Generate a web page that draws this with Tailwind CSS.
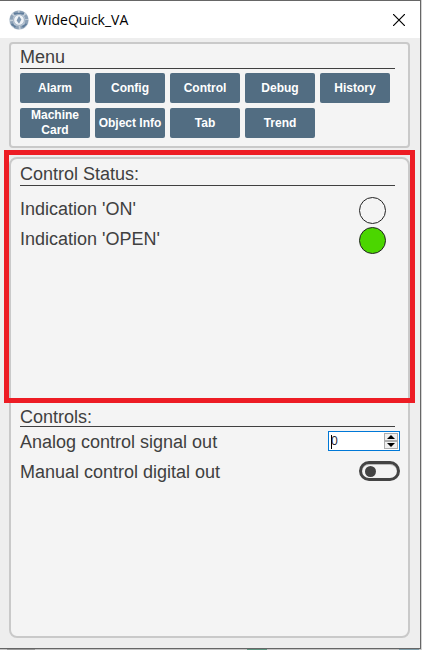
<!DOCTYPE html>
<html lang="en">
<head>
<meta charset="utf-8">
<meta name="viewport" content="width=device-width, initial-scale=1">
<title>WideQuick_VA</title>
<script src="https://cdn.jsdelivr.net/npm/@tailwindcss/browser@4"></script>
</head>
<body class="flex min-h-screen flex-col bg-[#d4d4d4] pr-px font-['Liberation_Sans',Arial,sans-serif] text-lg text-[#404040]">
<div class="flex flex-1 flex-col border-t border-r border-b border-[#666] bg-[#eee]">
  <header class="flex h-[37px] items-center bg-white pl-[9px] pr-[15px]">
    <svg class="size-5" viewBox="0 0 20 20" aria-hidden="true">
      <circle cx="10" cy="10" r="9.8" fill="#c3ced9"/>
      <circle cx="10" cy="10" r="7.8" fill="none" stroke="#8ba0b6" stroke-width="3" stroke-dasharray="4.4 1.8"/>
      <path d="M5 3.6h10M2.5 14l4 3M17.5 14l-4 3" stroke="#5f7d9c" stroke-width="1.8"/>
      <circle cx="10" cy="10" r="5.4" fill="#eff3f7" stroke="#9fb0c2"/>
      <path d="M10 6 12.4 9.6 10 13.8 7.6 10.4z" fill="#7f97b0"/>
    </svg>
    <h1 class="ml-1.5 flex-1 font-['Open_Sans','Noto_Sans',sans-serif] text-sm leading-5 text-black">WideQuick_VA</h1>
    <button type="button" aria-label="Close" class="size-3">
      <svg viewBox="0 0 12 12" class="size-3" fill="none" stroke="#000" stroke-width="1.2"><path d="M0 0 12 12M12 0 0 12"/></svg>
    </button>
  </header>

  <main class="flex flex-1 flex-col gap-[9px] pt-1 pr-[10px] pb-[10px] pl-[9px]">
    <nav aria-label="Menu" class="rounded border-2 border-[#c9c9c9] bg-[#f4f4f4] pt-[3px] pr-[13px] pb-2 pl-[9px]">
      <h2 class="border-b border-[#404040] pb-px leading-5">Menu</h2>
      <div class="mt-1 flex flex-wrap gap-[5px] text-xs leading-[15px] font-bold text-white">
        <button type="button" class="h-[30px] w-[70px] rounded-xs bg-[#526d82]">Alarm</button>
        <button type="button" class="h-[30px] w-[70px] rounded-xs bg-[#526d82]">Config</button>
        <button type="button" class="h-[30px] w-[70px] rounded-xs bg-[#526d82]">Control</button>
        <button type="button" class="h-[30px] w-[70px] rounded-xs bg-[#526d82]">Debug</button>
        <button type="button" class="h-[30px] w-[70px] rounded-xs bg-[#526d82]">History</button>
        <button type="button" class="h-[30px] w-[70px] rounded-xs bg-[#526d82]">Machine Card</button>
        <button type="button" class="h-[30px] w-[70px] rounded-xs bg-[#526d82]">Object Info</button>
        <button type="button" class="h-[30px] w-[70px] rounded-xs bg-[#526d82]">Tab</button>
        <button type="button" class="h-[30px] w-[70px] rounded-xs bg-[#526d82]">Trend</button>
      </div>
    </nav>

    <div class="relative flex-1 rounded-lg border-2 border-[#c9c9c9] bg-[#f4f4f4] pt-[5px] pl-[9px]">
      <section class="min-h-[245px] pr-[13px]">
        <h2 class="border-b border-[#404040] pb-px leading-5">Control Status:</h2>
        <ul class="pt-2 pr-[9px]">
          <li class="flex h-[30px] items-end justify-between"><span class="self-center leading-5">Indication 'ON'</span><span role="img" aria-label="Off" class="size-[27px] rounded-full border border-[#222]"></span></li>
          <li class="flex h-[30px] items-end justify-between"><span class="self-center leading-5">Indication 'OPEN'</span><span role="img" aria-label="On" class="size-[27px] rounded-full border border-[#222] bg-[#4bd600]"></span></li>
        </ul>
      </section>
      <section>
        <h2 class="mr-[13px] border-b border-[#404040] pb-px leading-4">Controls:</h2>
        <div class="flex h-[30px] items-start justify-between pt-1 pr-2">
          <label for="analog" class="leading-[22px]">Analog control signal out</label>
          <div class="relative flex h-5 w-[72px] border border-[#0078d7] bg-white p-px">
            <input id="analog" type="number" value="0" class="min-w-0 flex-1 appearance-none pl-px font-['Open_Sans','Noto_Sans',sans-serif] text-xs leading-4 text-[#223] outline-none [-moz-appearance:textfield] [&::-webkit-inner-spin-button]:appearance-none">
            <span class="absolute top-[3px] left-[2px] h-[14px] w-px bg-black"></span>
            <div class="flex w-[14px] flex-col">
              <button type="button" aria-label="Increase" class="flex flex-1 items-center justify-center border border-[#adadad] bg-[#f0f0f0]"><svg viewBox="0 0 8 4" class="h-1 w-2"><path d="M0 4 4 0 8 4z"/></svg></button>
              <button type="button" aria-label="Decrease" class="flex flex-1 items-center justify-center border border-[#adadad] bg-[#f0f0f0]"><svg viewBox="0 0 8 4" class="h-1 w-2"><path d="M0 0 4 4 8 0z"/></svg></button>
            </div>
          </div>
        </div>
        <div class="flex h-[30px] items-start justify-between pt-1 pr-2">
          <label for="digital" class="leading-[22px]">Manual control digital out</label>
          <input id="digital" type="checkbox" role="switch" class="flex h-5 w-[41px] appearance-none items-center rounded-full border-3 border-[#444] pl-[3px] inset-shadow-[0_1px_0_#bbb] before:size-[11px] before:rounded-full before:bg-[#444] checked:justify-end checked:pr-[3px]">
        </div>
      </section>
      <div class="pointer-events-none absolute -top-[9px] -right-[7px] -left-[7px] h-[253px] border-5 border-[#ed1c24]"></div>
    </div>
  </main>
</div>
<div class="flex h-px bg-[#c4c4c4] pl-[7px]" aria-hidden="true">
  <span class="w-7 bg-[#999]"></span>
  <span class="ml-auto mr-[132px] w-5 bg-[#5f9480]"></span>
  <span class="mr-[2px] w-5 bg-[#7f9ca8]"></span>
</div>
</body>
</html>
